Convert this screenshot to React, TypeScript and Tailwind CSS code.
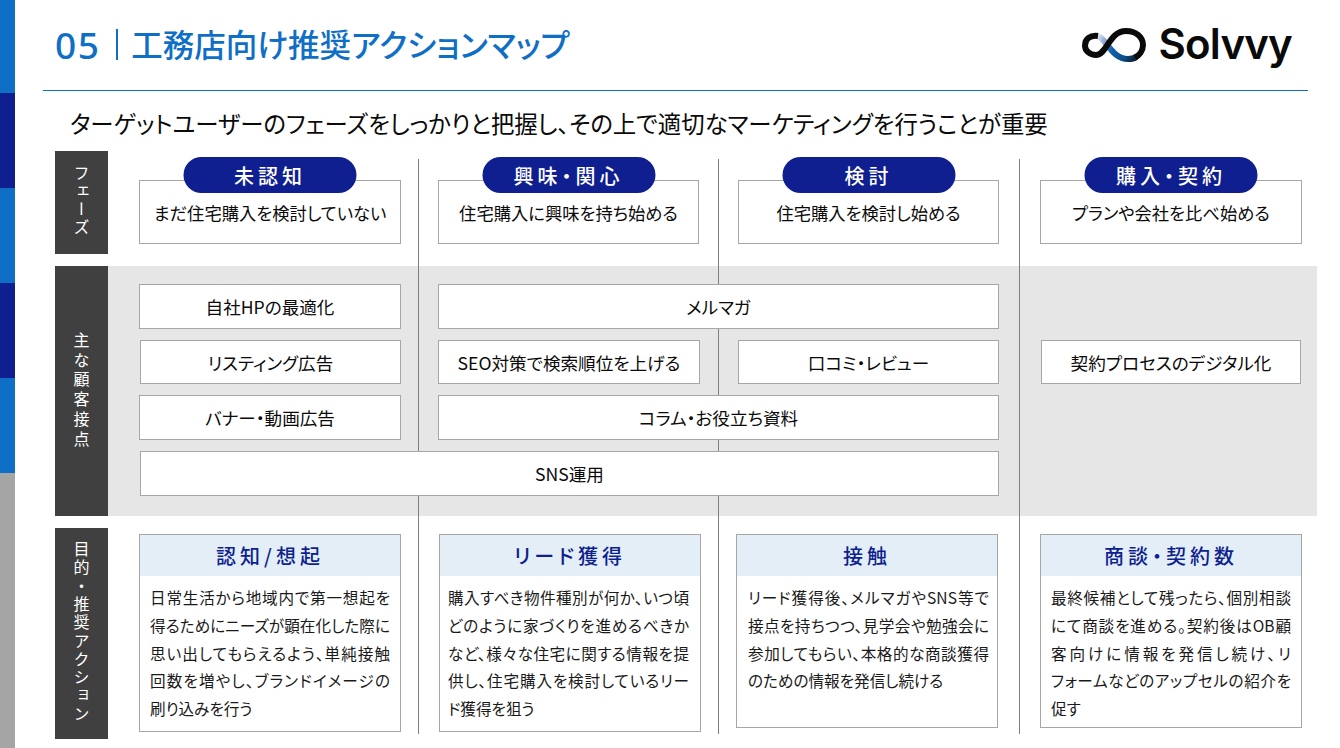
const body = `[font-feature-settings:"palt"]`;

function Logo() {
  return (
    <div className="flex items-center">
      <svg width="64" height="36" viewBox="0 0 64 36" fill="none" className="block">
        <defs>
          <linearGradient id="sg" gradientUnits="userSpaceOnUse" x1="15" y1="8" x2="56" y2="30">
            <stop offset="0" stopColor="#e6ebf6" />
            <stop offset="0.2" stopColor="#8ea6d2" />
            <stop offset="0.42" stopColor="#0f62ab" />
            <stop offset="0.72" stopColor="#0f4f8c" />
            <stop offset="1" stopColor="#0b1a24" />
          </linearGradient>
        </defs>
        <path d="M15 8 C24 9 29 31 46 31 C49 31 52 30.5 54 29" stroke="url(#sg)" strokeWidth="6" />
        <path d="M16 8 C8 7 3 11 3 17.5 C3 23 8 27 14 27 C25 27 27 3 44 3 C54 3 61 9 61 17 C61 23 57 27.5 53 29.5" stroke="#0a0a0a" strokeWidth="6" />
      </svg>
      <span className="ml-[13px] font-['Inter',sans-serif] font-semibold text-[42px] leading-none tracking-[-0.8px] text-[#0a0a0a] pb-[3px]">Solvvy</span>
    </div>
  );
}

function SideLabel({ children, className }: { children: string; className: string }) {
  return (
    <div className={`w-[53px] shrink-0 bg-[#404040] text-white flex justify-center ${className}`}>
      <span className="[writing-mode:vertical-rl] text-[16px] leading-none">{children}</span>
    </div>
  );
}

function PhaseCard({ pill, text, className }: { pill: string; text: string; className: string }) {
  return (
    <div className={`relative z-[2] h-[64px] border border-[#a6a6a6] bg-white flex items-center justify-center pt-[2px] text-[17.3px] text-[#0a0a0a] ${body} ${className}`}>
      <div className="absolute left-1/2 -translate-x-1/2 top-[-24px] w-[173px] h-[36px] rounded-[18px] bg-[#0f1f8f] text-white flex items-center justify-center pt-[2px] text-[20px] font-medium tracking-[4px]">
        {pill}
      </div>
      {text}
    </div>
  );
}

function Touch({ children, className }: { children: string; className: string }) {
  return (
    <div className={`relative z-[2] border border-[#a6a6a6] bg-white flex items-center justify-center pt-[2px] text-[17.6px] text-[#0a0a0a] ${body} ${className}`}>
      {children}
    </div>
  );
}

function GoalCard({ title, lines, last, className, pad }: { title: string; lines: string[]; last?: string; className: string; pad: string }) {
  return (
    <div className={`relative z-[2] border border-[#a6a6a6] bg-white ${className}`}>
      <div className={`h-[41px] bg-[#e3eef6] flex items-center justify-center text-[20px] font-medium tracking-[4px] text-[#0f1f8f] ${body}`}>
        {title}
      </div>
      <div className={`${pad} pt-[8px] text-[15.6px] leading-[27.8px] text-[#1a1a1a] ${body}`}>
        {lines.map((l) => (
          <div key={l} className="[text-align:justify] [text-align-last:justify]">{l}</div>
        ))}
        {last && <div>{last}</div>}
      </div>
    </div>
  );
}

export default function App() {
  return (
    <div className="relative w-[1340px] h-[748px] overflow-hidden bg-white flex font-['Noto_Sans_CJK_JP',sans-serif]">
      <div className="w-[15px] shrink-0 flex flex-col">
        <div className="h-[93px] bg-[#0f6fc6]" />
        <div className="h-[95px] bg-[#0f1f8f]" />
        <div className="h-[95px] bg-[#0f6fc6]" />
        <div className="h-[95px] bg-[#0f1f8f]" />
        <div className="h-[95px] bg-[#0f6fc6]" />
        <div className="flex-1 bg-[#a5a5a5]" />
      </div>

      <div className="flex-1 min-w-0">
        <header className="ml-[28px] w-[1265px] h-[91px] border-b border-[#0f6fc6] flex items-start justify-between">
          <h1 className={`ml-[12px] mt-[21px] flex items-center text-[#0f6fc6] font-medium leading-none h-[46px] ${body}`}>
            <span className="text-[37px] tracking-[1.5px] font-['Noto_Sans',sans-serif]">05</span>
            <span className="ml-[16px] mr-[13px] w-[2px] h-[31px] bg-[#0f6fc6]" />
            <span className="text-[31.5px]">工務店向け推奨アクションマップ</span>
          </h1>
          <div className="mr-[16px] mt-[23px]">
            <Logo />
          </div>
        </header>

        <p className={`ml-[55px] h-[60px] pt-[14px] text-[23.4px] leading-[36px] text-[#0a0a0a] ${body}`}>
          ターゲットユーザーのフェーズをしっかりと把握し、その上で適切なマーケティングを行うことが重要
        </p>

        <div className="relative ml-[40px] flex flex-col gap-[12px]">
          {/* phase dividers */}
          <div className="absolute z-[1] left-[363px] top-[8px] h-[575px] w-px bg-[#7f7f7f]" />
          <div className="absolute z-[1] left-[663px] top-[8px] h-[575px] w-px bg-[#7f7f7f]" />
          <div className="absolute z-[1] left-[964px] top-[8px] h-[575px] w-px bg-[#7f7f7f]" />

          <section className="flex h-[103px]">
            <SideLabel className="pt-[14px] [&>span]:tracking-[2px]">フェーズ</SideLabel>
            <div className="ml-[31px] pt-[29px] flex items-start">
              <PhaseCard className="w-[262px]" pill="未認知" text="まだ住宅購入を検討していない" />
              <PhaseCard className="ml-[37px] w-[261px]" pill="興味・関心" text="住宅購入に興味を持ち始める" />
              <PhaseCard className="ml-[39px] w-[261px]" pill="検討" text="住宅購入を検討し始める" />
              <PhaseCard className="ml-[41px] w-[262px]" pill="購入・契約" text="プランや会社を比べ始める" />
            </div>
          </section>

          <section className="flex h-[250px]">
            <SideLabel className="items-center [&>span]:tracking-[3.7px]">主な顧客接点</SideLabel>
            <div className="flex-1 mr-[23px] bg-[#e6e6e6] pl-[31px] pt-[18px]">
              <div className="grid grid-cols-[262px_37px_262px_38px_261px_42px_260px] grid-rows-[45px_44px_45px_45px] gap-y-[11px]">
                <Touch className="col-start-1 row-start-1">自社HPの最適化</Touch>
                <Touch className="col-start-3 col-end-6 row-start-1">メルマガ</Touch>
                <Touch className="col-start-1 row-start-2 ml-px">リスティング広告</Touch>
                <Touch className="col-start-3 row-start-2">SEO対策で検索順位を上げる</Touch>
                <Touch className="col-start-5 row-start-2">口コミ・レビュー</Touch>
                <Touch className="col-start-7 row-start-2">契約プロセスのデジタル化</Touch>
                <Touch className="col-start-1 row-start-3">バナー・動画広告</Touch>
                <Touch className="col-start-3 col-end-6 row-start-3">コラム・お役立ち資料</Touch>
                <Touch className="col-start-1 col-end-6 row-start-4 ml-px">SNS運用</Touch>
              </div>
            </div>
          </section>

          <section className="flex h-[211px]">
            <SideLabel className="pt-[13px] [&>span]:tracking-[2.3px]">目的・推奨アクション</SideLabel>
            <div className="ml-[31px] pt-[6px] flex items-start">
              <GoalCard
                className="w-[262px] h-[198px]"
                pad="px-[10px]"
                title="認知/想起"
                lines={["日常生活から地域内で第一想起を", "得るためにニーズが顕在化した際に", "思い出してもらえるよう、単純接触", "回数を増やし、ブランドイメージの"]}
                last="刷り込みを行う"
              />
              <GoalCard
                className="ml-[38px] w-[262px] h-[198px]"
                pad="pl-[8px] pr-[11px]"
                title="リード獲得"
                lines={["購入すべき物件種別が何か、いつ頃", "どのように家づくりを進めるべきか", "など、様々な住宅に関する情報を提", "供し、住宅購入を検討しているリー"]}
                last="ド獲得を狙う"
              />
              <GoalCard
                className="ml-[35px] w-[262px] h-[194px]"
                pad="pl-[11px] pr-[8px]"
                title="接触"
                lines={["リード獲得後、メルマガやSNS等で", "接点を持ちつつ、見学会や勉強会に", "参加してもらい、本格的な商談獲得"]}
                last="のための情報を発信し続ける"
              />
              <GoalCard
                className="ml-[42px] w-[262px] h-[194px]"
                pad="px-[10px]"
                title="商談・契約数"
                lines={["最終候補として残ったら、個別相談", "にて商談を進める。契約後はOB顧", "客向けに情報を発信し続け、リ", "フォームなどのアップセルの紹介を"]}
                last="促す"
              />
            </div>
          </section>
        </div>
      </div>
    </div>
  );
}
